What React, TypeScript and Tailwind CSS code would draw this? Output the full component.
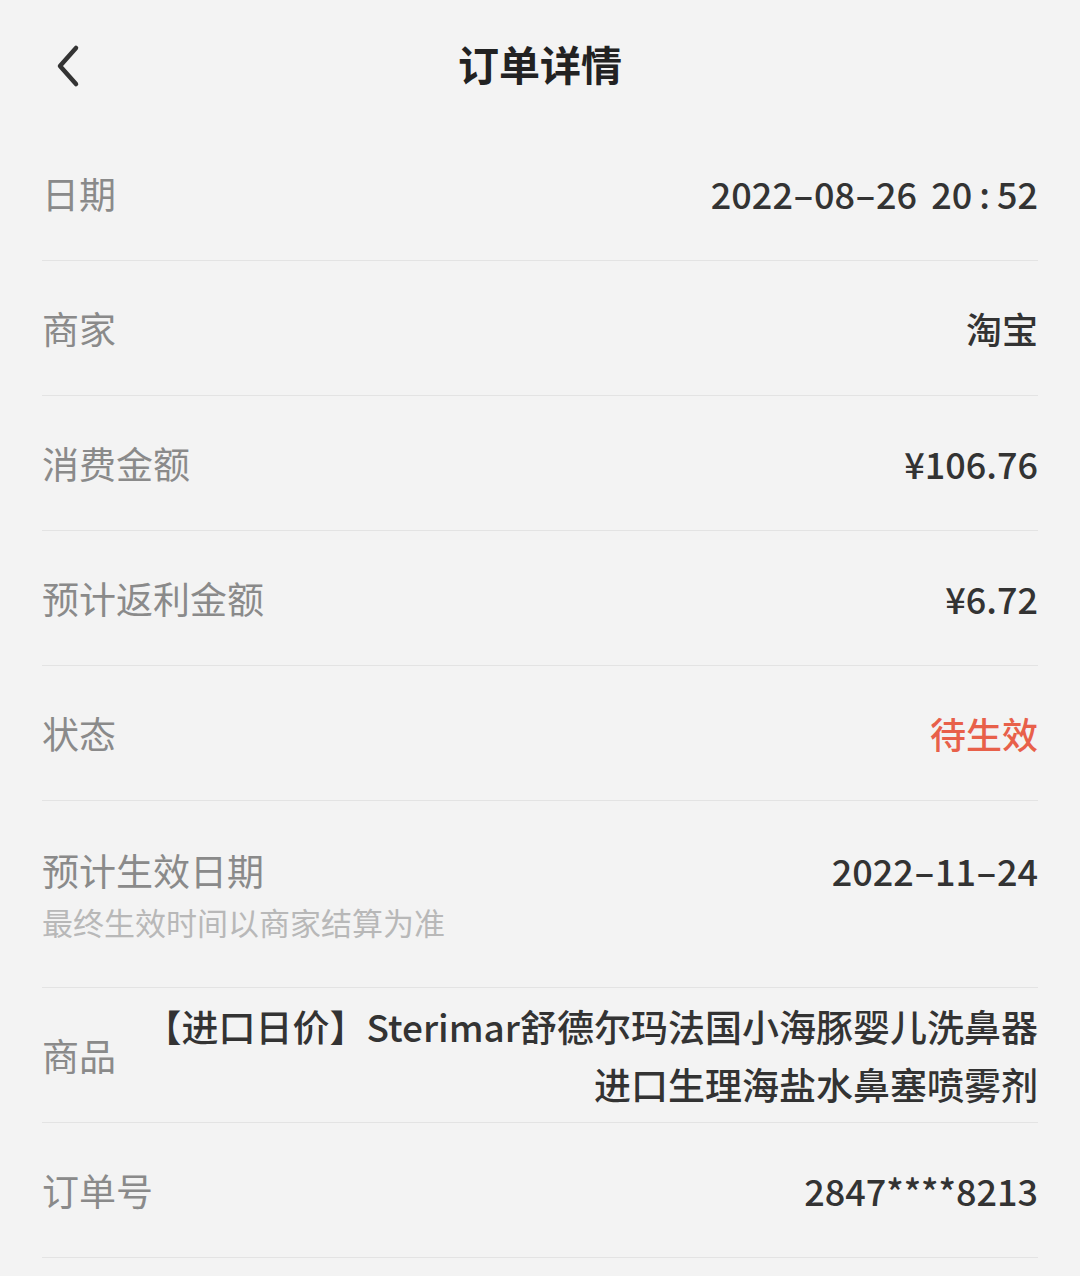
import React from 'react';

interface RowProps {
  label: string;
  hint?: string;
  children: React.ReactNode;
  tall?: boolean;
}

const Row: React.FC<RowProps> = ({ label, hint, children, tall }) => {
  return (
    <div
      className={`flex items-center justify-between border-b border-[#e3e3e3] ${
        tall ? 'h-[187px]' : 'h-[135px]'
      }`}
    >
      <div className="flex flex-col shrink-0">
        <div className="text-[37px] leading-[48px] text-[#8a8a8a]">{label}</div>
        {hint && <div className="text-[31px] leading-[40px] mt-[8px] text-[#b8b8b8]">{hint}</div>}
      </div>
      <div className={`text-right text-[36px] leading-[58px] font-medium text-[#333333] ${tall ? 'self-start mt-[40px]' : ''}`}>
        {children}
      </div>
    </div>
  );
};

// the screenshot's font sets separators wider than Noto does
const Num: React.FC<{ value: string }> = ({ value }) => (
  <>
    {value.split('').map((c, i) => {
      if (c === '-')
        return (
          <span key={i} className="inline-block w-[21px] text-center">
            <span className="inline-block scale-x-[1.7]">-</span>
          </span>
        );
      if (c === ':') return <span key={i} className="mx-[7px]">:</span>;
      if (c === ' ') return <span key={i} className="mr-[6px]"> </span>;
      return <React.Fragment key={i}>{c}</React.Fragment>;
    })}
  </>
);

const App: React.FC = () => {
  return (
    <div
      className="min-h-[1276px] w-[1080px] bg-[#f3f3f3]"
      style={{ fontFamily: '"Noto Sans CJK SC", "Noto Sans", sans-serif' }}
    >
      <div className="relative flex h-[126px] items-center justify-center">
        <button className="absolute left-[50px] top-[40px] p-[4px]">
          <svg width="28" height="44" viewBox="0 0 28 44" fill="none">
            <path d="M22 4 L6 22 L22 40" stroke="#333333" strokeWidth="4.5" strokeLinecap="round" strokeLinejoin="round" />
          </svg>
        </button>
        <div className="mt-[2px] text-[41px] font-bold text-[#222222]">订单详情</div>
      </div>

      <div className="px-[42px]">
        <Row label="日期">
          <Num value="2022-08-26 20:52" />
        </Row>
        <Row label="商家">淘宝</Row>
        <Row label="消费金额">¥106.76</Row>
        <Row label="预计返利金额">¥6.72</Row>
        <Row label="状态">
          <span className="text-[#e8604a]">待生效</span>
        </Row>
        <Row label="预计生效日期" hint="最终生效时间以商家结算为准" tall>
          <Num value="2022-11-24" />
        </Row>
        <Row label="商品">
          <span className="text-[37px]">
            【进口日价】Sterimar舒德尔玛法国小海豚婴儿洗鼻器
            <br />
            进口生理海盐水鼻塞喷雾剂
          </span>
        </Row>
        <Row label="订单号">2847****8213</Row>
      </div>
    </div>
  );
};

export default App;
